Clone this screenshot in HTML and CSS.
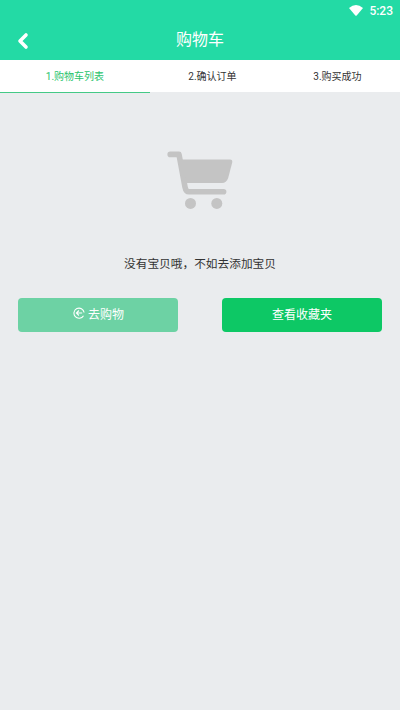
FILE: index.html
```html
<!DOCTYPE html>
<html lang="zh-CN">
<head>
<meta charset="utf-8">
<title>购物车</title>
<link rel="stylesheet" href="styles.css">
</head>
<body>
<header class="header">
  <div class="status">
    <svg class="wifi" viewBox="0 0 16 13"><path d="M1 4Q8-1.8 15 4L8.7 11.4Q8 12.2 7.3 11.4Z"/></svg>
    <span>5:23</span>
  </div>
  <div class="titlebar">
    <svg class="back" viewBox="0 0 12 18"><path d="M9 3 3 9l6 6"/></svg>
    <h1 class="title">购物车</h1>
  </div>
</header>
<nav class="steps">
  <div class="step active">1.购物车列表</div>
  <div class="step">2.确认订单</div>
  <div class="step">3.购买成功</div>
</nav>
<main class="content">
  <svg class="cart" viewBox="0 0 66 58">
    <path d="M3.2 3.4H12L18 36Q18.9 40.8 22 40.8H56.6" class="frame"/>
    <path d="M14 8.5H63Q65.8 8.5 65.2 11.5L61.2 27Q59.4 32 55 32H19.5Z"/>
    <circle cx="23.5" cy="52.4" r="5.5"/><circle cx="49.8" cy="52.4" r="5.5"/>
  </svg>
  <p class="message">没有宝贝哦，不如去添加宝贝</p>
  <div class="actions">
    <div class="button shop">
      <svg class="arrow" viewBox="0 0 12 12"><path d="M10.5 8.7A5.1 5.1 0 1 1 11.1 5.5M9.2 6H3.4M5.9 3.5 3.4 6l2.5 2.5"/></svg>
      <span>去购物</span>
    </div>
    <div class="button favorites">查看收藏夹</div>
  </div>
</main>
</body>
</html>
```
FILE: styles.css
```css
* { box-sizing: border-box; }
body {
  margin: 0;
  min-height: 710px;
  background: #eaecee;
  color: #333;
  font-family: Roboto, "Noto Sans CJK SC", sans-serif;
}
.header {
  height: 60px;
  background: #23daa5;
  color: #fff;
}
.status {
  height: 20px;
  padding: 1px 7px 0 0;
  display: flex;
  justify-content: flex-end;
  align-items: center;
  gap: 5px;
  font-size: 12px;
  font-weight: 500;
}
.wifi { width: 16px; height: 13px; margin-bottom: 1px; fill: #fff; }
.titlebar {
  height: 40px;
  display: grid;
  grid-template-columns: 40px 1fr 40px;
  align-items: center;
}
.back {
  width: 12px;
  height: 18px;
  margin: 2px 0 0 17px;
  fill: none;
  stroke: #fff;
  stroke-width: 3.6;
  stroke-linecap: round;
  stroke-linejoin: round;
}
.title {
  margin: 0;
  text-align: center;
  font-size: 16px;
  font-weight: 400;
  line-height: 24px;
}
.steps {
  height: 32px;
  display: grid;
  grid-template-columns: 150px 1fr 1fr;
  background: #fff;
  font-size: 10px;
  line-height: 32px;
  text-align: center;
}
.step { height: 33px; padding-top: 1px; line-height: 31px; }
.step.active {
  border-bottom: 1px solid #45c986;
  color: #28c46c;
}
.content { padding: 59px 18px 0; }
.cart {
  display: block;
  width: 66px;
  height: 58px;
  margin: 0 auto;
  fill: #c4c4c4;
}
.cart .frame {
  fill: none;
  stroke: #c4c4c4;
  stroke-width: 5.6;
  stroke-linecap: round;
  stroke-linejoin: round;
}
.message {
  margin: 45px 0 0;
  text-align: center;
  font-size: 11.7px;
  line-height: 20px;
}
.actions {
  margin-top: 24px;
  display: flex;
  justify-content: space-between;
}
.button {
  width: 160px;
  height: 34px;
  display: flex;
  align-items: center;
  justify-content: center;
  gap: 3px;
  border-radius: 4px;
  color: #fff;
  font-size: 12px;
  padding-bottom: 3px;
}
.shop { background: #6dd2a4; }
.favorites { background: #0dc865; }
.arrow {
  width: 12px;
  height: 12px;
  margin: 0 0 2px 1px;
  fill: none;
  stroke: #fff;
  stroke-width: 1.1;
}
```
